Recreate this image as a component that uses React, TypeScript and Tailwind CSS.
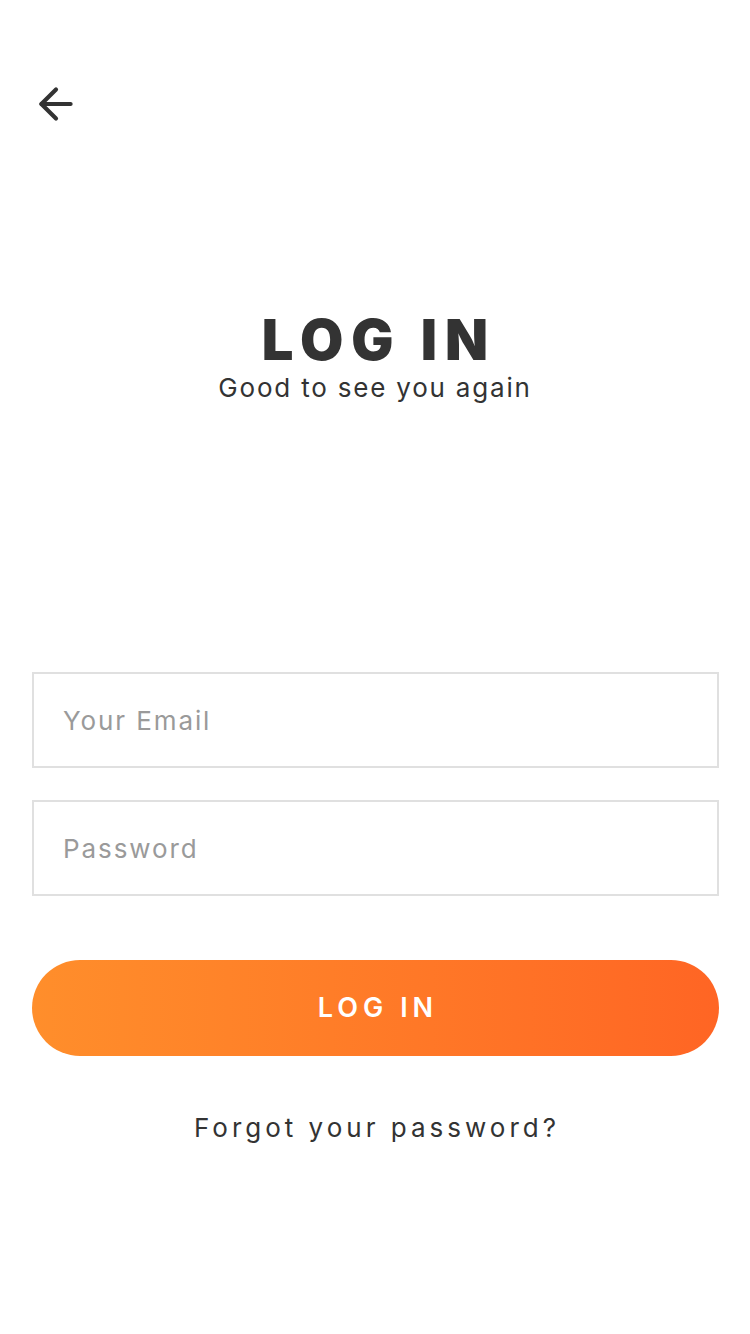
import { ArrowLeft } from "lucide-react";

export default function App() {
  const inputClass =
    "w-full h-[96px] border-2 border-[#e0e0e0] bg-white px-[29px] text-[26px] tracking-[1.9px] text-[#333] placeholder-[#9a9a9a] outline-none";

  return (
    <div
      className="min-h-[1334px] w-[750px] bg-white flex flex-col"
      style={{ fontFamily: "Inter, 'Noto Sans', sans-serif" }}
    >
      {/* Back */}
      <div className="pt-[79px] pl-[31px] h-[129px]">
        <button className="text-[#333] block">
          <ArrowLeft className="h-[50px] w-[50px]" strokeWidth={2} />
        </button>
      </div>

      {/* Heading */}
      <div className="mt-[181px] flex flex-col items-center text-[#333]">
        <h1 className="text-[56px] leading-[60px] font-black tracking-[8px] pl-[8px]">LOG IN</h1>
        <p className="mt-[2px] text-[26px] leading-[32px] tracking-[1.8px]">Good to see you again</p>
      </div>

      {/* Form */}
      <form className="mt-[268px] pl-[32px] pr-[31px] flex flex-col">
        <input className={inputClass} placeholder="Your Email" />
        <input type="password" className={inputClass + " mt-[32px]"} placeholder="Password" />
        <button
          type="button"
          className="mt-[64px] h-[96px] rounded-full bg-gradient-to-r from-[#ff8e2b] to-[#ff6524] text-white text-[27px] font-semibold tracking-[5px] pl-[5px]"
        >
          LOG IN
        </button>
      </form>

      <p className="mt-[52px] text-center text-[26px] text-[#333] tracking-[4px] pl-[4px]">
        Forgot your password?
      </p>
    </div>
  );
}
